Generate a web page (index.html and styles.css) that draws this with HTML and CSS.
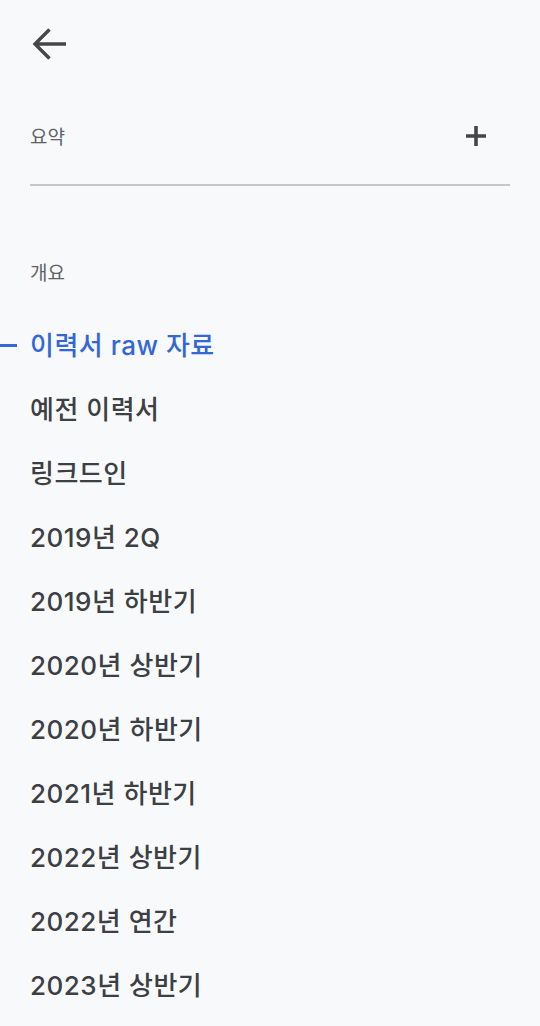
FILE: index.html
```html
<!DOCTYPE html>
<html lang="ko">
<head>
<meta charset="utf-8">
<link rel="stylesheet" href="styles.css">
</head>
<body>
<div class="panel">
  <div class="topbar">
    <svg class="back" width="36" height="34" viewBox="0 0 36 34" aria-hidden="true">
      <path d="M34 17 H5 M17.5 2.5 L3 17 L17.5 31.5" fill="none" stroke="#444746" stroke-width="3.4" stroke-linecap="butt" stroke-linejoin="miter"/>
    </svg>
  </div>
  <div class="summary">
    <span class="label">요약</span>
    <svg class="plus" width="20" height="20" viewBox="0 0 20 20" aria-hidden="true">
      <path d="M10 0 V20 M0 10 H20" stroke="#444746" stroke-width="3.6"/>
    </svg>
  </div>
  <div class="divider"></div>
  <div class="section label">개요</div>
  <ul class="outline">
    <li class="item active">이력서 raw 자료</li>
    <li class="item">예전 이력서</li>
    <li class="item">링크드인</li>
    <li class="item">2019년 2Q</li>
    <li class="item">2019년 하반기</li>
    <li class="item">2020년 상반기</li>
    <li class="item">2020년 하반기</li>
    <li class="item">2021년 하반기</li>
    <li class="item">2022년 상반기</li>
    <li class="item">2022년 연간</li>
    <li class="item">2023년 상반기</li>
  </ul>
</div>
</body>
</html>
```
FILE: styles.css
```css
html, body {
  margin: 0;
  padding: 0;
  background: #f8f9fb;
}
body {
  font-family: Inter, "Noto Sans CJK KR", sans-serif;
  color: #3c4043;
  width: 540px;
  height: 1026px;
  overflow: hidden;
}
.panel {
  display: flex;
  flex-direction: column;
}
.topbar {
  height: 88px;
  display: flex;
  align-items: center;
  padding-left: 32px;
}
.back {
  display: block;
}
.summary {
  height: 96px;
  display: flex;
  align-items: center;
  justify-content: space-between;
  padding: 0 54px 0 30px;
}
.label {
  font-family: "Noto Sans CJK KR", sans-serif;
  font-size: 19px;
  color: #5f6368;
  line-height: 32px;
}
.plus {
  display: block;
}
.divider {
  height: 2px;
  background: #c7c7c7;
  margin: 0 30px;
}
.section {
  margin-top: 70px;
  padding-left: 30px;
}
.outline {
  list-style: none;
  margin: 26px 0 0;
  padding: 0;
}
.item {
  position: relative;
  height: 64px;
  line-height: 64px;
  padding-left: 30px;
  font-size: 26px;
  font-weight: 500;
  letter-spacing: 0.5px;
  color: #3c4043;
  white-space: nowrap;
}
.item.active {
  color: #3367d6;
}
.item.active::before {
  content: "";
  position: absolute;
  left: 0;
  top: 30px;
  width: 17px;
  height: 3px;
  background: #3367d6;
}
```
